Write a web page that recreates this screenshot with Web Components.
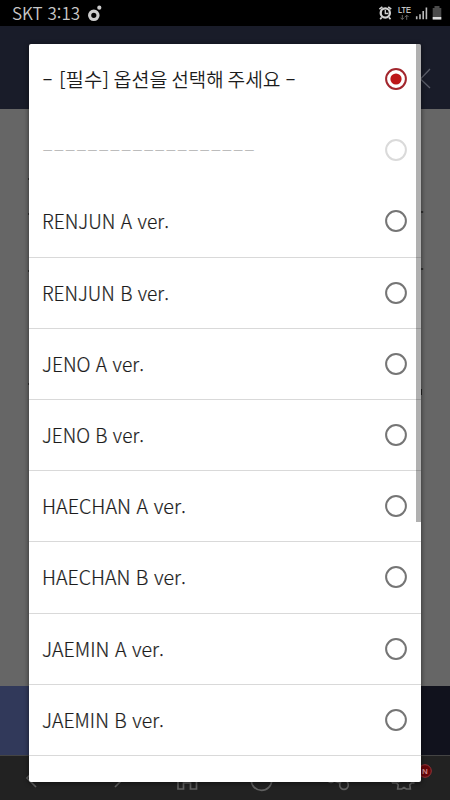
<!DOCTYPE html>
<html lang="ko">
<head>
<meta charset="utf-8">
<title>옵션 선택</title>
<style>
html,body{margin:0;height:100%;background:#666}
body{font-family:"Noto Sans CJK KR",sans-serif;overflow:hidden}
</style>
</head>
<body>
<phone-screen></phone-screen>
<script>
const make=(name,html,setup)=>customElements.define(name,class extends HTMLElement{
  connectedCallback(){
    if(this.shadowRoot)return;
    this.attachShadow({mode:'open'}).innerHTML=html;
    if(setup)setup.call(this,this.shadowRoot);
  }
});

make('status-bar',`<style>
:host{display:flex;height:26px;flex:none;background:#000;color:#c8c8c8;align-items:center;box-sizing:border-box;padding:0 8px 0 12px;font:17px/26px "Noto Sans CJK KR",sans-serif}
.t{font-weight:350;font-size:17px;width:68px;white-space:nowrap}
.n{margin-left:8px}.s{margin-left:auto}svg{display:block}
</style><span class="t">SKT 3:13</span>
<svg class="n" width="16" height="26" viewBox="0 0 16 26"><circle cx="5.8" cy="15.3" r="4.2" fill="none" stroke="#ccc" stroke-width="3.2"/><circle cx="11.3" cy="7.7" r="2.1" fill="#ccc"/></svg>
<svg class="s" width="64" height="26" viewBox="378 0 64 26">
<g fill="none" stroke="#d2d2d2"><circle cx="385.3" cy="13" r="4.6" stroke-width="2.3"/><path d="M385.3 10v3.5h3" stroke-width="1.3"/><path d="M379.4 9.2l3-2.4M391.2 9.2l-3-2.4M381.7 17.4l-1.5 1.8M389 17.4l1.5 1.8" stroke-width="1.7"/></g>
<text x="398" y="13" font-family="Liberation Sans,sans-serif" font-size="8.5" textLength="13" lengthAdjust="spacingAndGlyphs" fill="#d8d8d8" stroke="#d8d8d8" stroke-width=".2">LTE</text>
<path d="M402.3 15v4.5M400.5 17.7l1.8 1.8 1.8-1.8M406.7 19.8V15.2M404.9 17l1.8-1.8 1.8 1.8" fill="none" stroke="#666" stroke-width="1"/>
<path d="M416.7 19.3v-3M420 19.3v-5M423.2 19.3V11M426.4 19.3V7.5" stroke="#bbb" stroke-width="1.6"/>
<path d="M434.5 6h5v2h1.8v11.5h-8.6V8h1.8z" fill="#4b4b4b"/><path d="M432.7 17h8.6v2.5h-8.6z" fill="#ddd"/></svg>`);

make('page-header',`<style>:host{display:flex;flex:none;height:83px;background:#191c29;align-items:flex-end;justify-content:flex-end}svg{display:block;margin:0 18px 18px 0}</style>
<svg width="14" height="24" viewBox="0 0 14 24"><path d="M12 2L2.5 12l9.5 9" fill="none" stroke="#5a5d68" stroke-width="1.3"/></svg>`);

make('page-content',`<style>:host{display:flex;flex:1;min-height:0;background:#666}svg{display:block}</style>
<svg width="450" height="577" viewBox="0 109 450 577"><path d="M28 179h2M28 214h2M28 271h2M28 384h2M421 212h2.2M421 269h2.2" stroke="#222" stroke-width="1.5"/><path d="M421 389v6" stroke="#111" stroke-width="1.6"/></svg>`);

make('action-bar',`<style>:host{display:flex;flex:none;height:69px}i{flex:1;background:#31395a}b{flex:1;background:#11121d}</style><i></i><b></b>`);

make('browser-bar',`<style>:host{display:block;flex:none;height:45px;background:#222;border-top:1px solid #444;box-sizing:border-box}svg{display:block}</style>
<svg width="450" height="44" viewBox="0 756 450 44"><g fill="none" stroke="#606060" stroke-width="1.7">
<path d="M36 787l-9-9 9-9M115 787l9-9-9-9M178 779v10h5.5v-6h7v6h6v-10l-9.5-7z"/><circle cx="261.5" cy="780" r="10.3"/><circle cx="344" cy="785" r="4.3"/><circle cx="331" cy="779" r="3.5"/><path d="M334 781l6 2"/>
<path d="M392 783l4.5 0 1.7 1.8-.5 4.2 4 0 2.3-1.5 2.3 1.5 4 0-.5-4.2 1.7-1.8h3"/><path d="M391.5 782.6a9 9 0 0 1 8-.4" /></g>
<circle cx="425" cy="771" r="6.3" fill="#650509" stroke="#963438"/><text x="425" y="773.9" font-family="Liberation Sans,sans-serif" font-size="8" font-weight="bold" text-anchor="middle" fill="#cf8a8c">N</text></svg>`);

make('radio-mark',`<style>:host{display:block;flex:none;width:22px;height:22px;color:#757575}:host([disabled]){color:#dadada}:host([checked]){color:#a2262d}svg{display:block}.d{display:none}:host([checked]) .d{display:block}</style>
<svg width="22" height="22"><circle cx="11" cy="11" r="9.9" fill="none" stroke="currentColor" stroke-width="2"/><circle class="d" cx="11" cy="11" r="5.6" fill="#bd1719"/></svg>`);

make('option-row',`<style>
:host{display:flex;flex:none;height:71.2px;box-sizing:border-box;align-items:center;justify-content:space-between;padding:0 14.5px 0 13px;border-bottom:1px solid #d9d9d9;color:#1c1c1c}
:host([plain]){border-color:transparent}
:host([disabled]){color:#bcbcbc}
svg{display:block;overflow:visible}text{font:300 19.5px "Noto Sans CJK KR",sans-serif;fill:currentColor;stroke:currentColor;stroke-width:.2px;white-space:pre}
:host([words]) text{font-weight:350;font-size:19px;stroke:none}
slot{display:none}
</style><slot></slot><svg height="30"><text x="0" y="22.8" lengthAdjust="spacingAndGlyphs"></text></svg><radio-mark></radio-mark>`,function(r){
  const w=this.getAttribute('width'),t=r.querySelector('text');
  r.querySelector('svg').setAttribute('width',w);
  const words=this.getAttribute('words');
  if(words){
    const boxes=words.split(' ').map(p=>p.split(','));
    this.textContent.split(' ').forEach((word,i)=>{
      const s=document.createElementNS('http://www.w3.org/2000/svg','tspan');
      s.textContent=word;s.setAttribute('x',boxes[i][0]);s.setAttribute('textLength',boxes[i][1]);s.setAttribute('lengthAdjust','spacingAndGlyphs');
      if(i)t.append(' ');
      t.append(s);
    });
  }else{t.textContent=this.textContent;t.setAttribute('textLength',w);}
  for(const a of['checked','disabled'])if(this.hasAttribute(a))r.querySelector('radio-mark').setAttribute(a,'');
});

make('option-dialog',`<style>
:host{position:absolute;left:29px;top:44px;width:392px;height:738px;background:#fff;border-radius:2px;overflow:hidden;box-shadow:0 1px 4px 1px rgba(0,0,0,.4)}
.list{display:flex;flex-direction:column}
.bar{position:absolute;right:0;top:0;width:5px;height:478px;background:rgba(0,0,0,.31)}
</style><div class="list"><slot></slot></div><div class="bar"></div>`);

make('phone-screen',`<style>:host{display:flex;flex-direction:column;position:relative;width:450px;height:800px;overflow:hidden}</style>
<status-bar></status-bar><page-header></page-header><page-content></page-content><action-bar></action-bar><browser-bar></browser-bar>
<option-dialog>
<option-row plain checked width="254" words="0,11 17,50 71.5,54 129.5,52 185.5,53 243,11">- [필수] 옵션을 선택해 주세요 -</option-row>
<option-row plain disabled width="213">-------------------</option-row>
<option-row width="127">RENJUN A ver.</option-row>
<option-row width="127">RENJUN B ver.</option-row>
<option-row width="102">JENO A ver.</option-row>
<option-row width="102">JENO B ver.</option-row>
<option-row width="144">HAECHAN A ver.</option-row>
<option-row width="144">HAECHAN B ver.</option-row>
<option-row width="122">JAEMIN A ver.</option-row>
<option-row width="122">JAEMIN B ver.</option-row>
</option-dialog>`);
</script>
</body>
</html>
